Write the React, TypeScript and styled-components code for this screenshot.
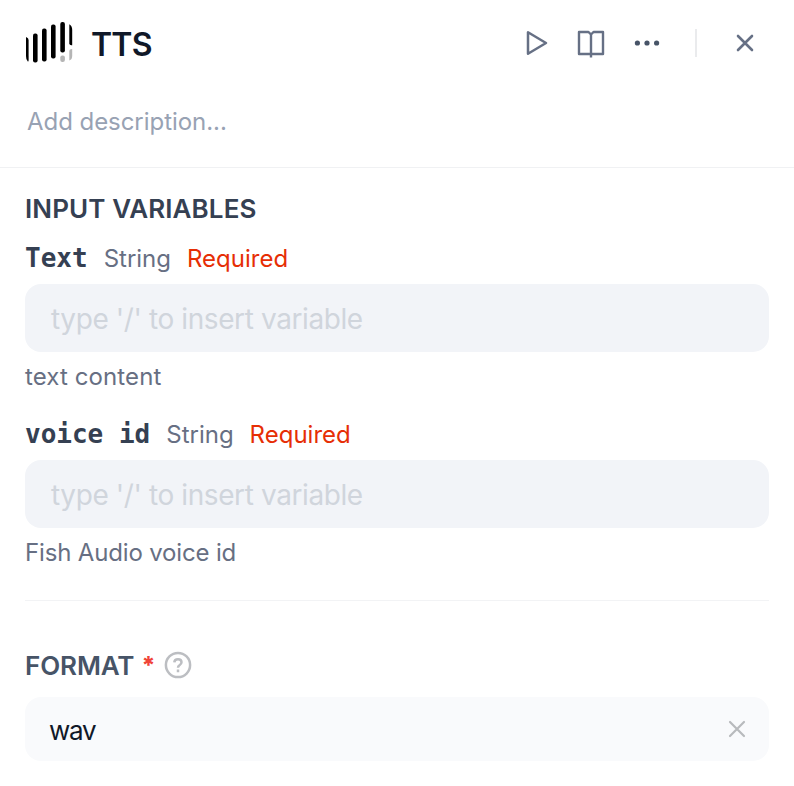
import React from 'react';
import styled, { createGlobalStyle } from 'styled-components';

const GlobalStyle = createGlobalStyle`
  * { box-sizing: border-box; }
  body { margin: 0; background: #fff; font-family: Inter, sans-serif; }
  button { border: 0; padding: 0; background: none; display: flex; cursor: pointer; }
`;

const Panel = styled.main`
  width: 794px;
  height: 786px;
  overflow: hidden;
  background: #fff;
`;
const Top = styled.header`
  height: 168px;
  border-bottom: 1px solid #f0f1f3;
`;
const TitleRow = styled.div`
  display: flex;
  align-items: center;
  height: 86px;
  padding: 0 34px 0 24px;
`;
const Title = styled.h1`
  flex: 1;
  margin: 3px 0 0 17px;
  font-size: 32px;
  line-height: 40px;
  font-weight: 600;
  letter-spacing: -0.8px;
  color: #101828;
`;
const Actions = styled.div`
  display: flex;
  align-items: center;
`;
const IconButton = styled.button<{ $gap?: number }>`
  margin-right: ${p => p.$gap ?? 0}px;
`;
const Separator = styled.span`
  width: 2px;
  height: 28px;
  margin-right: 37px;
  background: #eaebed;
`;
const Line = styled.span<{ $size: number; $color: string; $spacing?: number; $weight?: number }>`
  font-size: ${p => p.$size}px;
  line-height: 32px;
  font-weight: ${p => p.$weight ?? 400};
  letter-spacing: ${p => p.$spacing ?? 0}px;
  color: ${p => p.$color};
  white-space: pre;
`;
const Description = styled.div`
  display: flex;
  padding: 20px 27px;
`;
const Section = styled.section`
  margin: 0 25px;
`;
const Inputs = styled(Section)`
  height: 433px;
  padding-top: 25px;
  border-bottom: 1px solid #f2f3f5;
`;
const Heading = styled.h2<{ $color: string; $spacing: number }>`
  margin: 0;
  font-size: 26px;
  line-height: 32px;
  font-weight: 600;
  letter-spacing: ${p => p.$spacing}px;
  color: ${p => p.$color};
`;
const Field = styled.div`
  height: 176px;
  padding-top: 18px;
`;
const FieldLabel = styled.div`
  display: flex;
  align-items: center;
  height: 32px;
  margin-bottom: 9px;
`;
const Name = styled.span`
  margin: -3px 16px 0 0;
  font: 700 26px/32px 'DejaVu Sans Mono', monospace;
  color: #354052;
  white-space: pre;
`;
const Kind = styled(Line)`
  margin-right: 16px;
`;
const TextBox = styled.div`
  display: flex;
  align-items: center;
  height: 68px;
  margin-bottom: 9px;
  padding: 2px 26px 0;
  border-radius: 16px;
  background: #f2f4f8;
`;
const Hint = styled.div`
  display: flex;
`;
const FormatRow = styled.div`
  display: flex;
  align-items: center;
  height: 32px;
  margin: 48px 0 16px;
`;
const FormatHeading = styled(Heading)`
  padding-top: 2px;
`;
const Star = styled.span`
  width: 13px;
  margin: 2px 10px 0 7px;
  font-size: 24px;
  line-height: 32px;
  font-weight: 800;
  color: #f04438;
`;
const Select = styled.div`
  display: flex;
  align-items: center;
  justify-content: space-between;
  height: 64px;
  padding: 0 20px 0 24px;
  border-radius: 16px;
  background: #f9fafc;
`;
const Value = styled(Line)`
  padding-top: 3px;
`;

const Logo = () => (
  <svg width="50" height="44" viewBox="24 21 50 44">
    <path d="M26 37q2.600 1.200 2.600 3v20q0 2-.8 1.500Q26 60 26 56Z" />
    <rect x="33" y="33.500" width="4.600" height="29" rx="2" />
    <rect x="42" y="28.500" width="4.600" height="33" rx="2" />
    <rect x="51" y="24.500" width="4.600" height="34" rx="2" />
    <rect x="60.300" y="22" width="4.600" height="30.500" rx="2" />
    <path d="M69.300 24.200q2.900 1.500 2.900 5.500v15.500q-2.900.5-2.900-2Z" />
    <rect x="60.300" y="55.500" width="4.600" height="6.500" rx="2" fill="#b5b5b5" />
    <path d="M72.200 49v7q0 3.500-2.900 4.500V51q0-2 2.900-2Z" fill="#b5b5b5" />
  </svg>
);
const PlayIcon = () => (
  <svg width="28" height="28" viewBox="523 29 28 28" fill="none" stroke="#667085" strokeWidth="2.500" strokeLinejoin="round">
    <path d="M528 32.300v21.400L546 43Z" />
  </svg>
);
const BookIcon = () => (
  <svg width="28" height="30" viewBox="577 28 28 30" fill="none" stroke="#667085" strokeWidth="2.400" strokeLinejoin="round">
    <path d="M579 32h9.500L591 34.500l2.500-2.500H603v22H579ZM591 34v23.600" />
  </svg>
);
const MoreIcon = () => (
  <svg width="26" height="8" viewBox="634 39 26 8" fill="#475467">
    <circle cx="637.400" cy="43" r="2.600" />
    <circle cx="647" cy="43" r="2.600" />
    <circle cx="656.600" cy="43" r="2.600" />
  </svg>
);
const CrossIcon = ({ color, size, width }: { color: string; size: number; width: number }) => (
  <svg width={size} height={size} viewBox={`0 0 ${size} ${size}`} stroke={color} strokeWidth={width} strokeLinecap="round">
    <path d={`M4 4L${size - 4} ${size - 4}M${size - 4} 4L4 ${size - 4}`} />
  </svg>
);
const HelpIcon = () => (
  <svg width="28" height="28" viewBox="0 0 28 28" fill="none" stroke="#bcbec2" strokeWidth="2.500">
    <circle cx="14" cy="14" r="12.100" />
    <path d="M10.300 11.400Q10.500 8.300 14 8.300q3.500 0 3.500 3 0 1.700-2 2.900Q14 15.100 14 16.700M14 18.500v2.700" />
  </svg>
);

const VariableField = ({ name, hint, hintSpacing }: { name: string; hint: string; hintSpacing: number }) => (
  <Field>
    <FieldLabel>
      <Name>{name}</Name>
      <Kind $size={24} $color="#676f83">String</Kind>
      <Line $size={24} $color="#e62e05">Required</Line>
    </FieldLabel>
    <TextBox>
      <Line $size={28} $color="#d0d5dc" $spacing={-0.400}>{"type '/' to insert variable"}</Line>
    </TextBox>
    <Hint><Line $size={24} $color="#676f83" $spacing={hintSpacing}>{hint}</Line></Hint>
  </Field>
);

export default function App() {
  return (
    <>
      <GlobalStyle />
      <Panel>
        <Top>
          <TitleRow>
            <Logo />
            <Title>TTS</Title>
            <Actions>
              <IconButton $gap={26} aria-label="Run"><PlayIcon /></IconButton>
              <IconButton $gap={29} aria-label="Documentation"><BookIcon /></IconButton>
              <IconButton $gap={35} aria-label="More"><MoreIcon /></IconButton>
              <Separator />
              <IconButton $gap={4} aria-label="Close"><CrossIcon color="#667085" size={22} width={2.600} /></IconButton>
            </Actions>
          </TitleRow>
          <Description><Line $size={24} $color="#98a2b3" $spacing={-0.050}>Add description...</Line></Description>
        </Top>
        <Inputs>
          <Heading $color="#354052" $spacing={0.100}>INPUT VARIABLES</Heading>
          <VariableField name="Text" hint="text content" hintSpacing={0.100} />
          <VariableField name="voice id" hint="Fish Audio voice id" hintSpacing={-0.160} />
        </Inputs>
        <Section>
          <FormatRow>
            <FormatHeading $color="#475467" $spacing={-0.100}>FORMAT</FormatHeading>
            <Star>*</Star>
            <HelpIcon />
          </FormatRow>
          <Select>
            <Value $size={26} $color="#101828" $spacing={-1.200}>wav</Value>
            <IconButton $gap={1} aria-label="Clear"><CrossIcon color="#b8babd" size={22} width={2.200} /></IconButton>
          </Select>
        </Section>
      </Panel>
    </>
  );
}
